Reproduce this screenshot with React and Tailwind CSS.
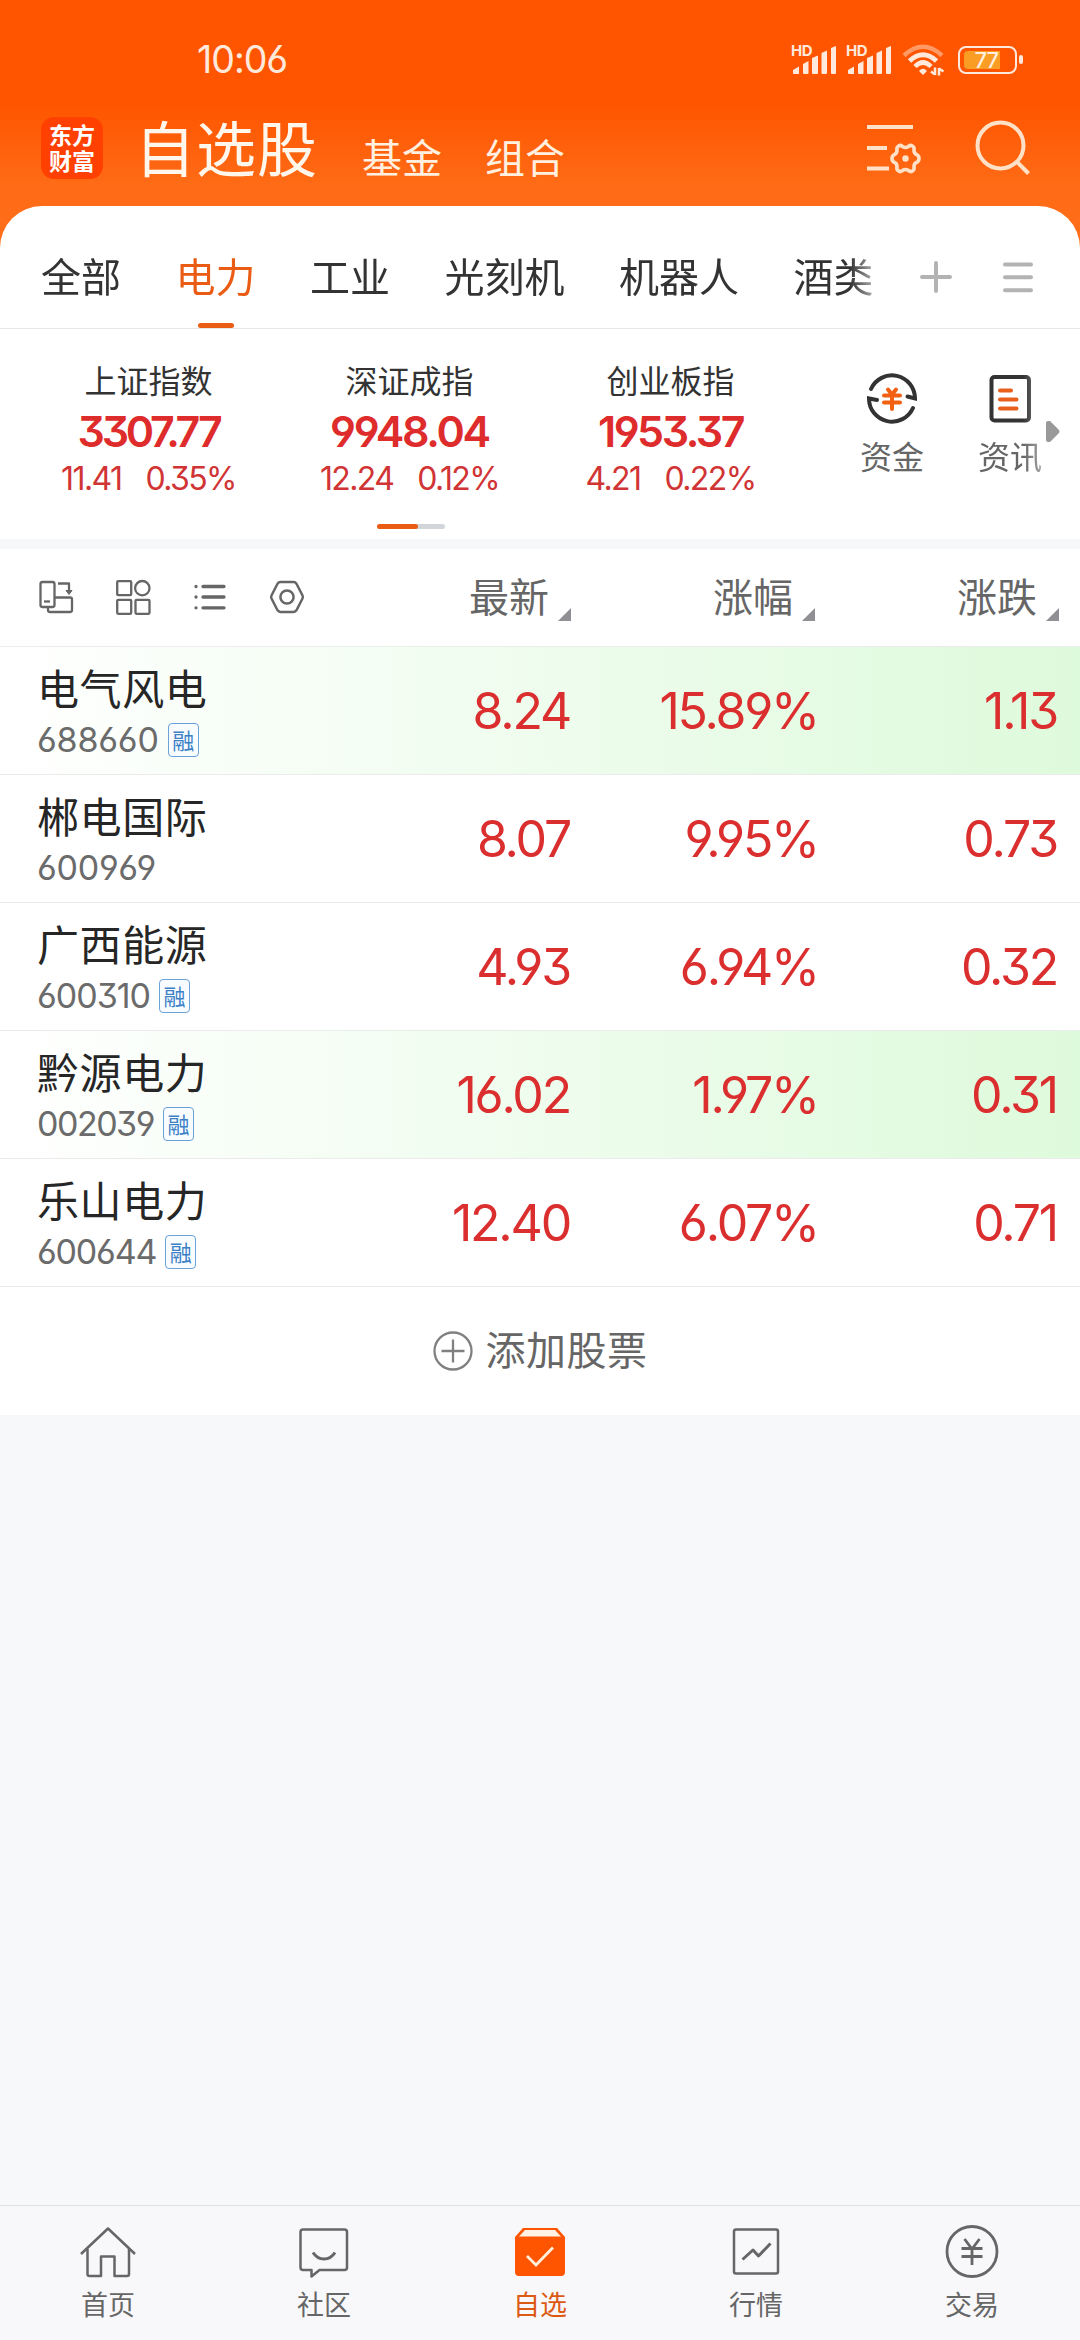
import React from 'react';

const CJK = "font-['Noto_Sans_CJK_SC',sans-serif]";
const NUM =
  "font-['Inter',sans-serif] [font-feature-settings:'cv03','cv04','cv09']";

const tabs = ['全部', '电力', '工业', '光刻机', '机器人', '酒类'];

const indices = [
  { name: '上证指数', value: '3307.77', diff: '11.41', pct: '0.35%', tracking: 'tracking-[-3.300px]' },
  { name: '深证成指', value: '9948.04', diff: '12.24', pct: '0.12%', tracking: 'tracking-[-2.300px]' },
  { name: '创业板指', value: '1953.37', diff: '4.21', pct: '0.22%', tracking: 'tracking-[-2.500px]' },
];

const stocks = [
  { name: '电气风电', code: '688660', margin: true, price: '8.24', pct: '15.89%', diff: '1.13', flash: true, tracking: 'tracking-[-0.200px]' },
  { name: '郴电国际', code: '600969', margin: false, price: '8.07', pct: '9.95%', diff: '0.73', flash: false, tracking: 'tracking-[-0.200px]' },
  { name: '广西能源', code: '600310', margin: true, price: '4.93', pct: '6.94%', diff: '0.32', flash: false, tracking: 'tracking-[-1px]' },
  { name: '黔源电力', code: '002039', margin: true, price: '16.02', pct: '1.97%', diff: '0.31', flash: true, tracking: 'tracking-[-1.500px]' },
  { name: '乐山电力', code: '600644', margin: true, price: '12.40', pct: '6.07%', diff: '0.71', flash: false, tracking: 'tracking-[-1.200px]' },
];

function Signal() {
  return (
    <div className="relative h-[32px] w-[46px]">
      <span className="absolute left-0 top-0 font-['Inter',sans-serif] text-[15px] font-bold leading-[14px] tracking-[-0.5px] text-[#ffe9dc]">
        HD
      </span>
      <svg className="absolute inset-0" width="46" height="32" viewBox="0 0 46 32" fill="#ffe9dc">
        <path d="M2 29V26L8 22.500V30H3Q2 30 2 29ZM12 29V20L17.500 17V29Q17.500 30 16.500 30H13Q12 30 12 29ZM21 29V14L27 11.500V29Q27 30 26 30H22Q21 30 21 29ZM30.500 29V9L36 6.500V29Q36 30 35 30H31.500Q30.500 30 30.500 29ZM40 29V4L45 2V29Q45 30 44 30H41Q40 30 40 29Z" />
      </svg>
    </div>
  );
}

function Wifi() {
  return (
    <svg width="44" height="34" viewBox="0 0 44 34" fill="none" stroke="#ffe9dc">
      <path d="M3 12.500Q22 -5 41 12.500" strokeWidth="4.500" stroke="#ff9a66" />
      <path d="M8.500 18Q22 5.500 35.500 18" strokeWidth="5" />
      <path d="M14 23.500Q22 15.500 30 23.500" strokeWidth="4.500" />
      <path d="M18 28Q22 23.500 26 28L22 32Z" fill="#ffe9dc" stroke="none" />
      <path d="M34 24.500V32M34 31.500L30 28.500M38 32.500V25M38 25.500L42.500 28.500" strokeWidth="2.500" />
    </svg>
  );
}

function Battery() {
  return (
    <div className="flex items-center gap-[2px]">
      <div className="flex h-[28px] w-[59px] items-center rounded-[8px] border-[2.5px] border-[#ffe9dc] pl-[4px]">
        <div className="flex h-[18px] w-[36px] items-center justify-end rounded-l-[4px] bg-[#f99d24] pr-[2px]">
          <span className={`text-[22px] font-medium leading-none tracking-[-1px] text-[#ffeede] ${NUM}`}>77</span>
        </div>
      </div>
      <div className="h-[9px] w-[4px] rounded-[2px] bg-[#ffe9dc]" />
    </div>
  );
}

function StatusBar() {
  return (
    <div className="flex h-[106px] items-center justify-between pl-[197px] pr-[57px] pt-[13px]">
      <span className={`text-[37.500px] leading-none tracking-[-1px] text-[#ffe9dc] ${NUM}`}>10:06</span>
      <div className="flex items-center gap-[9px]">
        <Signal />
        <Signal />
        <div className="mr-[4px]">
          <Wifi />
        </div>
        <Battery />
      </div>
    </div>
  );
}

function TitleBar() {
  return (
    <div className="flex h-[100px] items-start pl-[41px]">
      <div className="mt-[11px] flex h-[62px] w-[62px] items-center justify-center rounded-[13px] bg-[#ff4000] pb-[3px] text-center text-[23px] font-bold leading-[26px] text-white">
        <span className="w-[48px]">东方财富</span>
      </div>
      <h1 className="ml-[32px] mt-[10px] text-[60px] leading-none tracking-[1px] text-[#fff7ec]">自选股</h1>
      <span className="ml-[44px] mt-[30px] text-[40px] leading-none text-[#fff0e0]">基金</span>
      <span className="ml-[43px] mt-[30px] text-[40px] leading-none text-[#fff0e0]">组合</span>
      <div className="ml-auto mr-[48px] mt-[11px] flex gap-[50px]">
        <svg width="60" height="60" viewBox="0 0 60 60" fill="none" stroke="#ffe1c8" strokeWidth="4">
          <path d="M5 10H51M5 31H25M5 51.500H27" />
          <path
            strokeWidth="3.600"
            strokeLinejoin="round"
            d="M36 29.500Q38 27.500 40.500 29.500Q43.500 31.500 46.500 29.500Q49 27.500 51 29.500Q52.500 30.500 52 33.500Q52 36.500 55 37.800Q57 39 57 41.500Q57 44 55 45.200Q52 46.500 52 49.500Q52.500 52.500 51 53.500Q49 55.500 46.500 53.500Q43.500 51.500 40.500 53.500Q38 55.500 36 53.500Q34.500 52.500 35 49.500Q35 46.500 32 45.200Q30 44 30 41.500Q30 39 32 37.800Q35 36.500 35 33.500Q34.500 30.500 36 29.500Z"
          />
          <circle cx="43.500" cy="41.500" r="3.200" fill="#ffe1c8" stroke="none" />
        </svg>
        <svg width="60" height="60" viewBox="0 0 60 60" fill="none" stroke="#ffe1c8" strokeWidth="4">
          <circle cx="28.500" cy="28.500" r="23" />
          <path d="M44.500 44.500L56.500 56.500" />
        </svg>
      </div>
    </div>
  );
}

function Tabs() {
  return (
    <div className="flex h-[123px] items-stretch border-b border-[#e6e6e6]">
      <div className="flex w-[874px] gap-[54.500px] overflow-hidden whitespace-nowrap pl-[41px] [mask-image:linear-gradient(to_right,black_850px,rgba(0,0,0,0.4)_874px)]">
        {tabs.map((t, i) => (
          <div key={t} className="relative flex shrink-0 justify-center pt-[49px]">
            <span className={`text-[40px] leading-none ${i === 1 ? 'text-[#ea5c14]' : 'text-[#333333]'}`}>{t}</span>
            {i === 1 && <span className="absolute bottom-0 h-[5px] w-[36px] rounded-[3px] bg-[#ea5c14]" />}
          </div>
        ))}
      </div>
      <div className="flex flex-1 gap-[48px] pl-[45px] pt-[54px]">
        <svg width="34" height="34" viewBox="0 0 34 34" stroke="#b3b3b3" strokeWidth="4" strokeLinecap="round">
          <path d="M17 3V31M3 17H31" />
        </svg>
        <svg width="34" height="34" viewBox="0 0 34 34" stroke="#b3b3b3" strokeWidth="4" strokeLinecap="round">
          <path d="M4 4.500H30M4 17.300H30M4 30.300H30" />
        </svg>
      </div>
    </div>
  );
}

function IndexStrip() {
  return (
    <div className="flex h-[210px] bg-white">
      <div className="w-[820px]">
        <div className="flex h-[195px] pl-[18px]">
          {indices.map((x) => (
            <div key={x.name} className="flex w-[261px] flex-col items-center pt-[34px]">
              <span className="text-[32px] leading-none text-[#333333]">{x.name}</span>
              <span className={`mt-[14px] text-[43px] font-semibold leading-[44px] text-[#de2c2c] ${x.tracking} ${NUM}`}>{x.value}</span>
              <span className={`mt-[8px] flex gap-[24px] text-[32px] leading-[36px] tracking-[-1.600px] text-[#d13434] ${NUM}`}>
                <span>{x.diff}</span>
                <span>{x.pct}</span>
              </span>
            </div>
          ))}
        </div>
        <div className="ml-[377px] h-[5px] w-[68px] rounded-[3px] bg-[#d2d5da]">
          <div className="h-[5px] w-[41px] rounded-[3px] bg-[#ea5c14]" />
        </div>
      </div>
      <div className="flex pt-[41px]">
        <div className="ml-[40px] flex w-[64px] flex-col items-center">
          <svg width="54" height="54" viewBox="0 0 54 54" fill="none" stroke="#333" strokeWidth="4" strokeLinecap="round" strokeLinejoin="miter">
            <path d="M6 19A23 23 0 0 1 50 28.500L42.500 26.500" />
            <path d="M48 38A23 23 0 0 1 4 28.500L12 30" />
            <path d="M23 19.500L27 24.500L31 19.500M19 25.500H35M19 32.500H35M27 25V39" stroke="#f26012" strokeWidth="4" />
          </svg>
          <span className="mt-[15px] text-[32px] leading-none text-[#666666]">资金</span>
        </div>
        <div className="ml-[54px] flex w-[64px] flex-col items-center whitespace-nowrap [mask-image:linear-gradient(to_right,black_70%,rgba(0,0,0,0.6))]">
          <svg width="54" height="54" viewBox="0 0 54 54" fill="none" strokeLinecap="round">
            <rect x="8.500" y="7" width="37.500" height="43.500" rx="3" stroke="#333" strokeWidth="4" />
            <path d="M17 20.500H28M17 29.500H33.500M17 38.500H33.500" stroke="#e8601c" strokeWidth="4" />
          </svg>
          <span className="mt-[15px] text-[32px] leading-none text-[#666666]">资讯</span>
        </div>
        <svg className="ml-[4px] mt-[51px]" width="14" height="21" viewBox="0 0 14 21" fill="#999">
          <path d="M0 2Q0 0 2 0H4L13 9Q14 10.500 13 12L4 21H2Q0 21 0 19Z" />
        </svg>
      </div>
    </div>
  );
}

function SortHead({ label }) {
  return (
    <div className="flex w-[244px] items-end justify-end">
      <span className="mr-[9px] text-[40px] leading-none text-[#666666]">{label}</span>
      <svg className="mb-[-6px]" width="13" height="13" viewBox="0 0 13 13">
        <path d="M13 0V13H0Z" fill="#8f8f94" />
      </svg>
    </div>
  );
}

function TableHead() {
  return (
    <div className="flex h-[98px] items-start border-b border-[#ececec] bg-white pl-[36px]">
      <div className="mt-[28px] flex w-[291px] gap-[37px]">
        <svg className="shrink-0" width="40" height="40" viewBox="0 0 40 40" fill="none" stroke="#666" strokeWidth="2.300" strokeLinejoin="round">
          <rect x="4.500" y="5" width="14" height="25" rx="2" />
          <path d="M8 24.500H14" />
          <path d="M18.500 20.500H34Q36 20.500 36 22.500V33Q36 35 34 35H14Q12 35 12 33V30" />
          <path d="M22 6.500H33V16" />
          <path d="M30 13.500L33 17.500L36 13.500Z" fill="#666" strokeWidth="1" />
        </svg>
        <svg className="shrink-0" width="40" height="40" viewBox="0 0 40 40" fill="none" stroke="#666" strokeWidth="2.300">
          <rect x="4.200" y="4.200" width="14" height="14" rx="1" />
          <circle cx="29.300" cy="11.200" r="7.200" />
          <rect x="4.200" y="22.800" width="14" height="14" rx="1" />
          <rect x="22.500" y="22.800" width="14" height="14" rx="1" />
        </svg>
        <svg className="shrink-0" width="40" height="40" viewBox="0 0 40 40" stroke="#666" strokeWidth="3.300" strokeLinecap="round">
          <path d="M6 9.500H6.010M6 20H6.010M6 30.800H6.010M13 9.500H34M13 20H34M13 30.800H34" />
        </svg>
        <svg className="shrink-0" width="40" height="40" viewBox="0 0 40 40" fill="none" stroke="#666" strokeWidth="2.500" strokeLinejoin="round">
          <path d="M13.500 5H26.500Q28.500 5 29.500 6.800L35.500 18.500Q36.300 20 35.500 21.500L29.500 33.200Q28.500 35 26.500 35H13.500Q11.500 35 10.500 33.200L4.500 21.500Q3.700 20 4.500 18.500L10.500 6.800Q11.500 5 13.500 5Z" />
          <circle cx="20" cy="20" r="6.600" />
        </svg>
      </div>
      <div className="mt-[26px] flex">
        <SortHead label="最新" />
        <SortHead label="涨幅" />
        <SortHead label="涨跌" />
      </div>
    </div>
  );
}

function StockRow({ s }) {
  const cell = `text-right text-[50px] leading-none tracking-[-2.200px] text-[#db2e2e] ${NUM}`;
  return (
    <div
      className={`flex h-[128px] items-center border-b border-[#ebebeb] pl-[37px] ${
        s.flash ? 'bg-linear-to-r from-white to-[#defadc]' : 'bg-white'
      }`}
    >
      <div className="h-full w-[291px] pt-[17px]">
        <div className="text-[42px] leading-[46px] tracking-[0.600px] text-[#262626]">{s.name}</div>
        <div className="mt-[13px] flex h-[34px] items-center gap-[9px]">
          <span className={`text-[34px] leading-none text-[#6b6b6b] ${s.tracking} ${NUM}`}>{s.code}</span>
          {s.margin && (
            <span className="flex h-[34px] w-[31px] items-center justify-center rounded-[4px] border-[1.500px] border-[#6aa2da] bg-[#f8fcff] pb-[3px] text-[22px] leading-none text-[#3c80c6]">
              融
            </span>
          )}
        </div>
      </div>
      <span className={`w-[242px] ${cell}`}>{s.price}</span>
      <span className={`w-[248px] ${cell}`}>{s.pct}</span>
      <span className={`w-[239px] ${cell}`}>{s.diff}</span>
    </div>
  );
}

function AddRow() {
  return (
    <div className="flex h-[128px] items-center justify-center gap-[13px] bg-white">
      <svg width="40" height="40" viewBox="0 0 40 40" fill="none" stroke="#808080" strokeWidth="2.300">
        <circle cx="20" cy="20" r="18.500" />
        <path d="M20 8.500V31.500M8.500 20H31.500" />
      </svg>
      <span className="mt-[-6px] text-[40px] leading-none tracking-[0.500px] text-[#666666]">添加股票</span>
    </div>
  );
}

const navItems = [
  {
    label: '首页',
    icon: (
      <g fill="none" stroke="#666" strokeWidth="2.500" strokeLinejoin="round">
        <path d="M3 30L30 4.500L57 30" />
        <path d="M9.500 25V50Q9.500 52 11.500 52H23V32.500H36.500V52H49Q51 52 51 50V25" />
      </g>
    ),
  },
  {
    label: '社区',
    icon: (
      <g fill="none" stroke="#666" strokeWidth="2.500" strokeLinejoin="round">
        <path d="M9 5.500H50.500Q53 5.500 53 8V43.500Q53 46 50.500 46H25.500L17.500 52.500V46H9Q6.500 46 6.500 43.500V8Q6.500 5.500 9 5.500Z" />
        <path d="M19 28.500Q23 35 30 35Q37 35 41 28.500" strokeWidth="3" />
      </g>
    ),
  },
  {
    label: '自选',
    active: true,
    icon: (
      <g>
        <path d="M5 13L13 4H47L55 13V48Q55 52 51 52H9Q5 52 5 48Z" fill="#ff5500" />
        <path d="M9 12.500L15 6H45L51 12.500Z" fill="#fff0e6" />
        <path d="M17 32L26 41L43 23.500" fill="none" stroke="#fff0dc" strokeWidth="2.800" />
      </g>
    ),
  },
  {
    label: '行情',
    icon: (
      <g fill="none" stroke="#666" strokeWidth="2.500" strokeLinejoin="round">
        <rect x="8" y="5.500" width="44" height="44" rx="2" />
        <path d="M16.500 35.500L27 26L32.500 32L44.500 19.500" strokeWidth="3" />
      </g>
    ),
  },
  {
    label: '交易',
    icon: (
      <g fill="none" stroke="#666" strokeWidth="2.800">
        <circle cx="30" cy="27.500" r="25" />
        <path d="M22.500 15L30 25L37.500 15M19.500 24.500H40.500M19.500 32.500H40.500M30 25V41" />
      </g>
    ),
  },
];

function BottomNav() {
  return (
    <nav className="flex h-[135px] border-t border-[#dfe2e4] bg-[#f8f8fb]">
      {navItems.map((n) => (
        <div key={n.label} className="flex w-[216px] flex-col items-center pt-[18px]">
          <svg width="60" height="60" viewBox="0 0 60 60">
            {n.icon}
          </svg>
          <span className={`mt-[6px] text-[27px] leading-none ${n.active ? 'text-[#dc5a14]' : 'text-[#666666]'}`}>{n.label}</span>
        </div>
      ))}
    </nav>
  );
}

export default function App() {
  return (
    <div className={`flex h-[2340px] w-[1080px] flex-col overflow-hidden bg-[#f6f8fa] ${CJK}`}>
      <div className="bg-[linear-gradient(to_bottom,#ff5500_0px,#ff5500_105px,#ff6b16_185px,#ff6e1a_250px)]">
        <StatusBar />
        <TitleBar />
        <div className="rounded-t-[42px] bg-white">
          <Tabs />
        </div>
      </div>
      <IndexStrip />
      <div className="h-[10px]" />
      <TableHead />
      {stocks.map((s) => (
        <StockRow key={s.code} s={s} />
      ))}
      <AddRow />
      <div className="flex-1" />
      <BottomNav />
    </div>
  );
}
